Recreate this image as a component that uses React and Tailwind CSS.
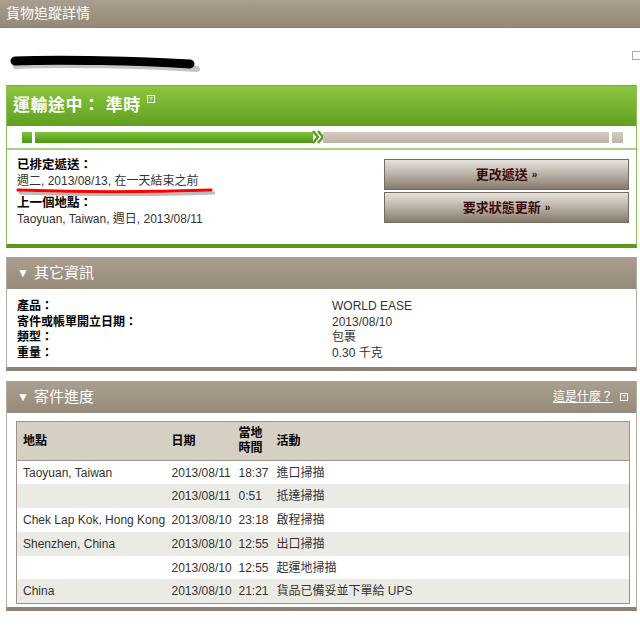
import React from "react";

const rows = [
  { place: "Taoyuan, Taiwan", date: "2013/08/11", time: "18:37", act: "進口掃描" },
  { place: "", date: "2013/08/11", time: "0:51", act: "抵達掃描" },
  { place: "Chek Lap Kok, Hong Kong", date: "2013/08/10", time: "23:18", act: "啟程掃描" },
  { place: "Shenzhen, China", date: "2013/08/10", time: "12:55", act: "出口掃描" },
  { place: "", date: "2013/08/10", time: "12:55", act: "起運地掃描" },
  { place: "China", date: "2013/08/10", time: "21:21", act: "貨品已備妥並下單給 UPS" },
];

const info = [
  ["產品：", "WORLD EASE"],
  ["寄件或帳單開立日期：", "2013/08/10"],
  ["類型：", "包裹"],
  ["重量：", "0.30 千克"],
];

const HelpBox = ({ className = "" }) => (
  <span
    className={`inline-flex items-center justify-center w-[8px] h-[8px] border border-current text-[6px] leading-none ${className}`}
  >
    ?
  </span>
);

const SectionHeader = ({ title, right }) => (
  <div className="h-[32px] flex items-center justify-between px-[10px] bg-gradient-to-b from-[#aa9f90] to-[#968a7a] text-white">
    <div className="flex items-center gap-[5px]">
      <span className="text-[12px]">▼</span>
      <span className="text-[15px]">{title}</span>
    </div>
    {right}
  </div>
);

const Button = ({ children }) => (
  <button className="h-[31px] w-full border border-[#766b5e] bg-gradient-to-b from-[#e6e3dd] via-[#b9b1a6] to-[#857a6c] text-[#3b0b0b] text-[13px] font-bold flex items-center justify-center gap-[4px]">
    {children}
    <span className="text-[10px]">»</span>
  </button>
);

export default function App() {
  return (
    <div
      className="w-[640px] h-[632px] bg-white overflow-hidden text-[12px] text-[#333]"
      style={{ fontFamily: '"Liberation Sans", Arial, "Noto Sans CJK TC", sans-serif' }}
    >
      {/* Page title */}
      <div className="h-[28px] px-[6px] flex items-center bg-gradient-to-b from-[#a99e8f] to-[#958978] text-white text-[14px] border-b border-[#8a7e6f]">
        貨物追蹤詳情
      </div>

      {/* Tracking number (redacted) */}
      <div className="h-[57px] flex items-center justify-between pl-[10px]">
        <svg width="192" height="24" viewBox="0 0 192 24" className="mt-[14px]">
          <path d="M6 14 C50 12 130 13 187 17" stroke="#c4c4c4" strokeWidth="6" fill="none" strokeLinecap="round" />
          <path d="M5 9 C50 7 130 9 180 12" stroke="#000" strokeWidth="9" fill="none" strokeLinecap="round" />
        </svg>
        <span className="w-[8px] h-[9px] border border-[#aaa] border-r-0 mt-[-2px]" />
      </div>

      {/* Status panel */}
      <div className="ml-[6px] mr-[3px] border-x border-[#8cbf58] border-b-4 border-b-[#5c991b]">
        <div className="h-[41px] px-[6px] flex items-center bg-gradient-to-b from-[#8bc63e] to-[#60a01f] border-t border-[#73ad30] text-white">
          <span className="text-[17px] font-bold tracking-[0.5px]">運輸途中： 準時</span>
          <HelpBox className="ml-[6px] mb-[14px] text-white" />
        </div>

        <div className="h-[24px] pl-[15px] pr-[13px] flex items-center border-b-2 border-[#a7cf86]">
          <span className="w-[10px] h-[11px] bg-gradient-to-b from-[#7fc23c] to-[#4e9413]" />
          <span className="ml-[3px] w-[278px] h-[11px] bg-gradient-to-b from-[#80c33d] to-[#4f9614]" />
          <svg width="12" height="14" viewBox="0 0 12 14" className="mx-[-1px]">
            <path d="M1 1 L6 7 L1 13" stroke="#5a9e1c" strokeWidth="2.5" fill="none" />
            <path d="M6 1 L11 7 L6 13" stroke="#5a9e1c" strokeWidth="2.5" fill="none" />
          </svg>
          <span className="flex-1 h-[11px] bg-gradient-to-b from-[#d4ccc1] to-[#beb4a6]" />
          <span className="ml-[3px] w-[11px] h-[11px] bg-gradient-to-b from-[#d4ccc1] to-[#beb4a6]" />
        </div>

        <div className="h-[94px] flex justify-between pl-[10px] pr-[7px]">
          <div className="relative pt-[7px] leading-[16px]">
            <div className="font-bold text-black text-[12.5px]">已排定遞送：</div>
            <div>週二, 2013/08/13, 在一天結束之前</div>
            <svg width="200" height="8" viewBox="0 0 200 8" className="absolute left-[-2px] top-[38px]">
              <path d="M3 4 C60 6 140 6 197 4" stroke="#bbb" strokeWidth="3" fill="none" strokeLinecap="round" transform="translate(2 1)" />
              <path d="M3 2 C60 4 140 4 196 2" stroke="#ff0000" strokeWidth="3" fill="none" strokeLinecap="round" />
            </svg>
            <div className="font-bold text-black text-[12.5px] mt-[6px]">上一個地點：</div>
            <div>Taoyuan, Taiwan, 週日, 2013/08/11</div>
          </div>
          <div className="w-[245px] pt-[9px] flex flex-col gap-[2px]">
            <Button>更改遞送</Button>
            <Button>要求狀態更新</Button>
          </div>
        </div>
      </div>

      {/* Other info */}
      <div className="ml-[6px] mr-[3px] mt-[9px] border-x border-[#b5ab9e] border-b-4 border-b-[#8d8273]">
        <SectionHeader title="其它資訊" />
        <div className="h-[78px] pt-[10px] pl-[10px] leading-[15.5px]">
          {info.map(([k, v]) => (
            <div key={k} className="flex">
              <span className="w-[315px] font-bold text-black">{k}</span>
              <span>{v}</span>
            </div>
          ))}
        </div>
      </div>

      {/* Shipment progress */}
      <div className="ml-[6px] mr-[3px] mt-[10px] border-x border-[#b5ab9e] border-b-4 border-b-[#8d8273]">
        <SectionHeader
          title="寄件進度"
          right={
            <div className="flex items-center gap-[7px] text-[12px] mr-[-2px]">
              <span className="underline">這是什麼？</span>
              <HelpBox className="text-white" />
            </div>
          }
        />
        <div className="pt-[8px] pb-[3px] pl-[9px] pr-[6px]">
          <table className="w-full border border-[#9d9487] border-collapse">
            <thead>
              <tr className="h-[39px] bg-[#d6cfc4] text-black font-bold text-left">
                <th className="w-[149px] pl-[6px] border-b border-[#9d9487]">地點</th>
                <th className="w-[67px] pl-[6px] border-b border-[#9d9487]">日期</th>
                <th className="w-[38px] pl-[6px] leading-[15px] border-b border-[#9d9487]">
                  當地
                  <br />
                  時間
                </th>
                <th className="pl-[6px] border-b border-[#9d9487]">活動</th>
              </tr>
            </thead>
            <tbody>
              {rows.map((r, i) => (
                <tr key={i} className={`h-[23.8px] ${i % 2 ? "bg-[#ebebe6]" : "bg-white"}`}>
                  <td className="pl-[6px] whitespace-nowrap">{r.place}</td>
                  <td className="pl-[6px]">{r.date}</td>
                  <td className="pl-[6px]">{r.time}</td>
                  <td className="pl-[6px]">{r.act}</td>
                </tr>
              ))}
            </tbody>
          </table>
        </div>
      </div>
    </div>
  );
}
